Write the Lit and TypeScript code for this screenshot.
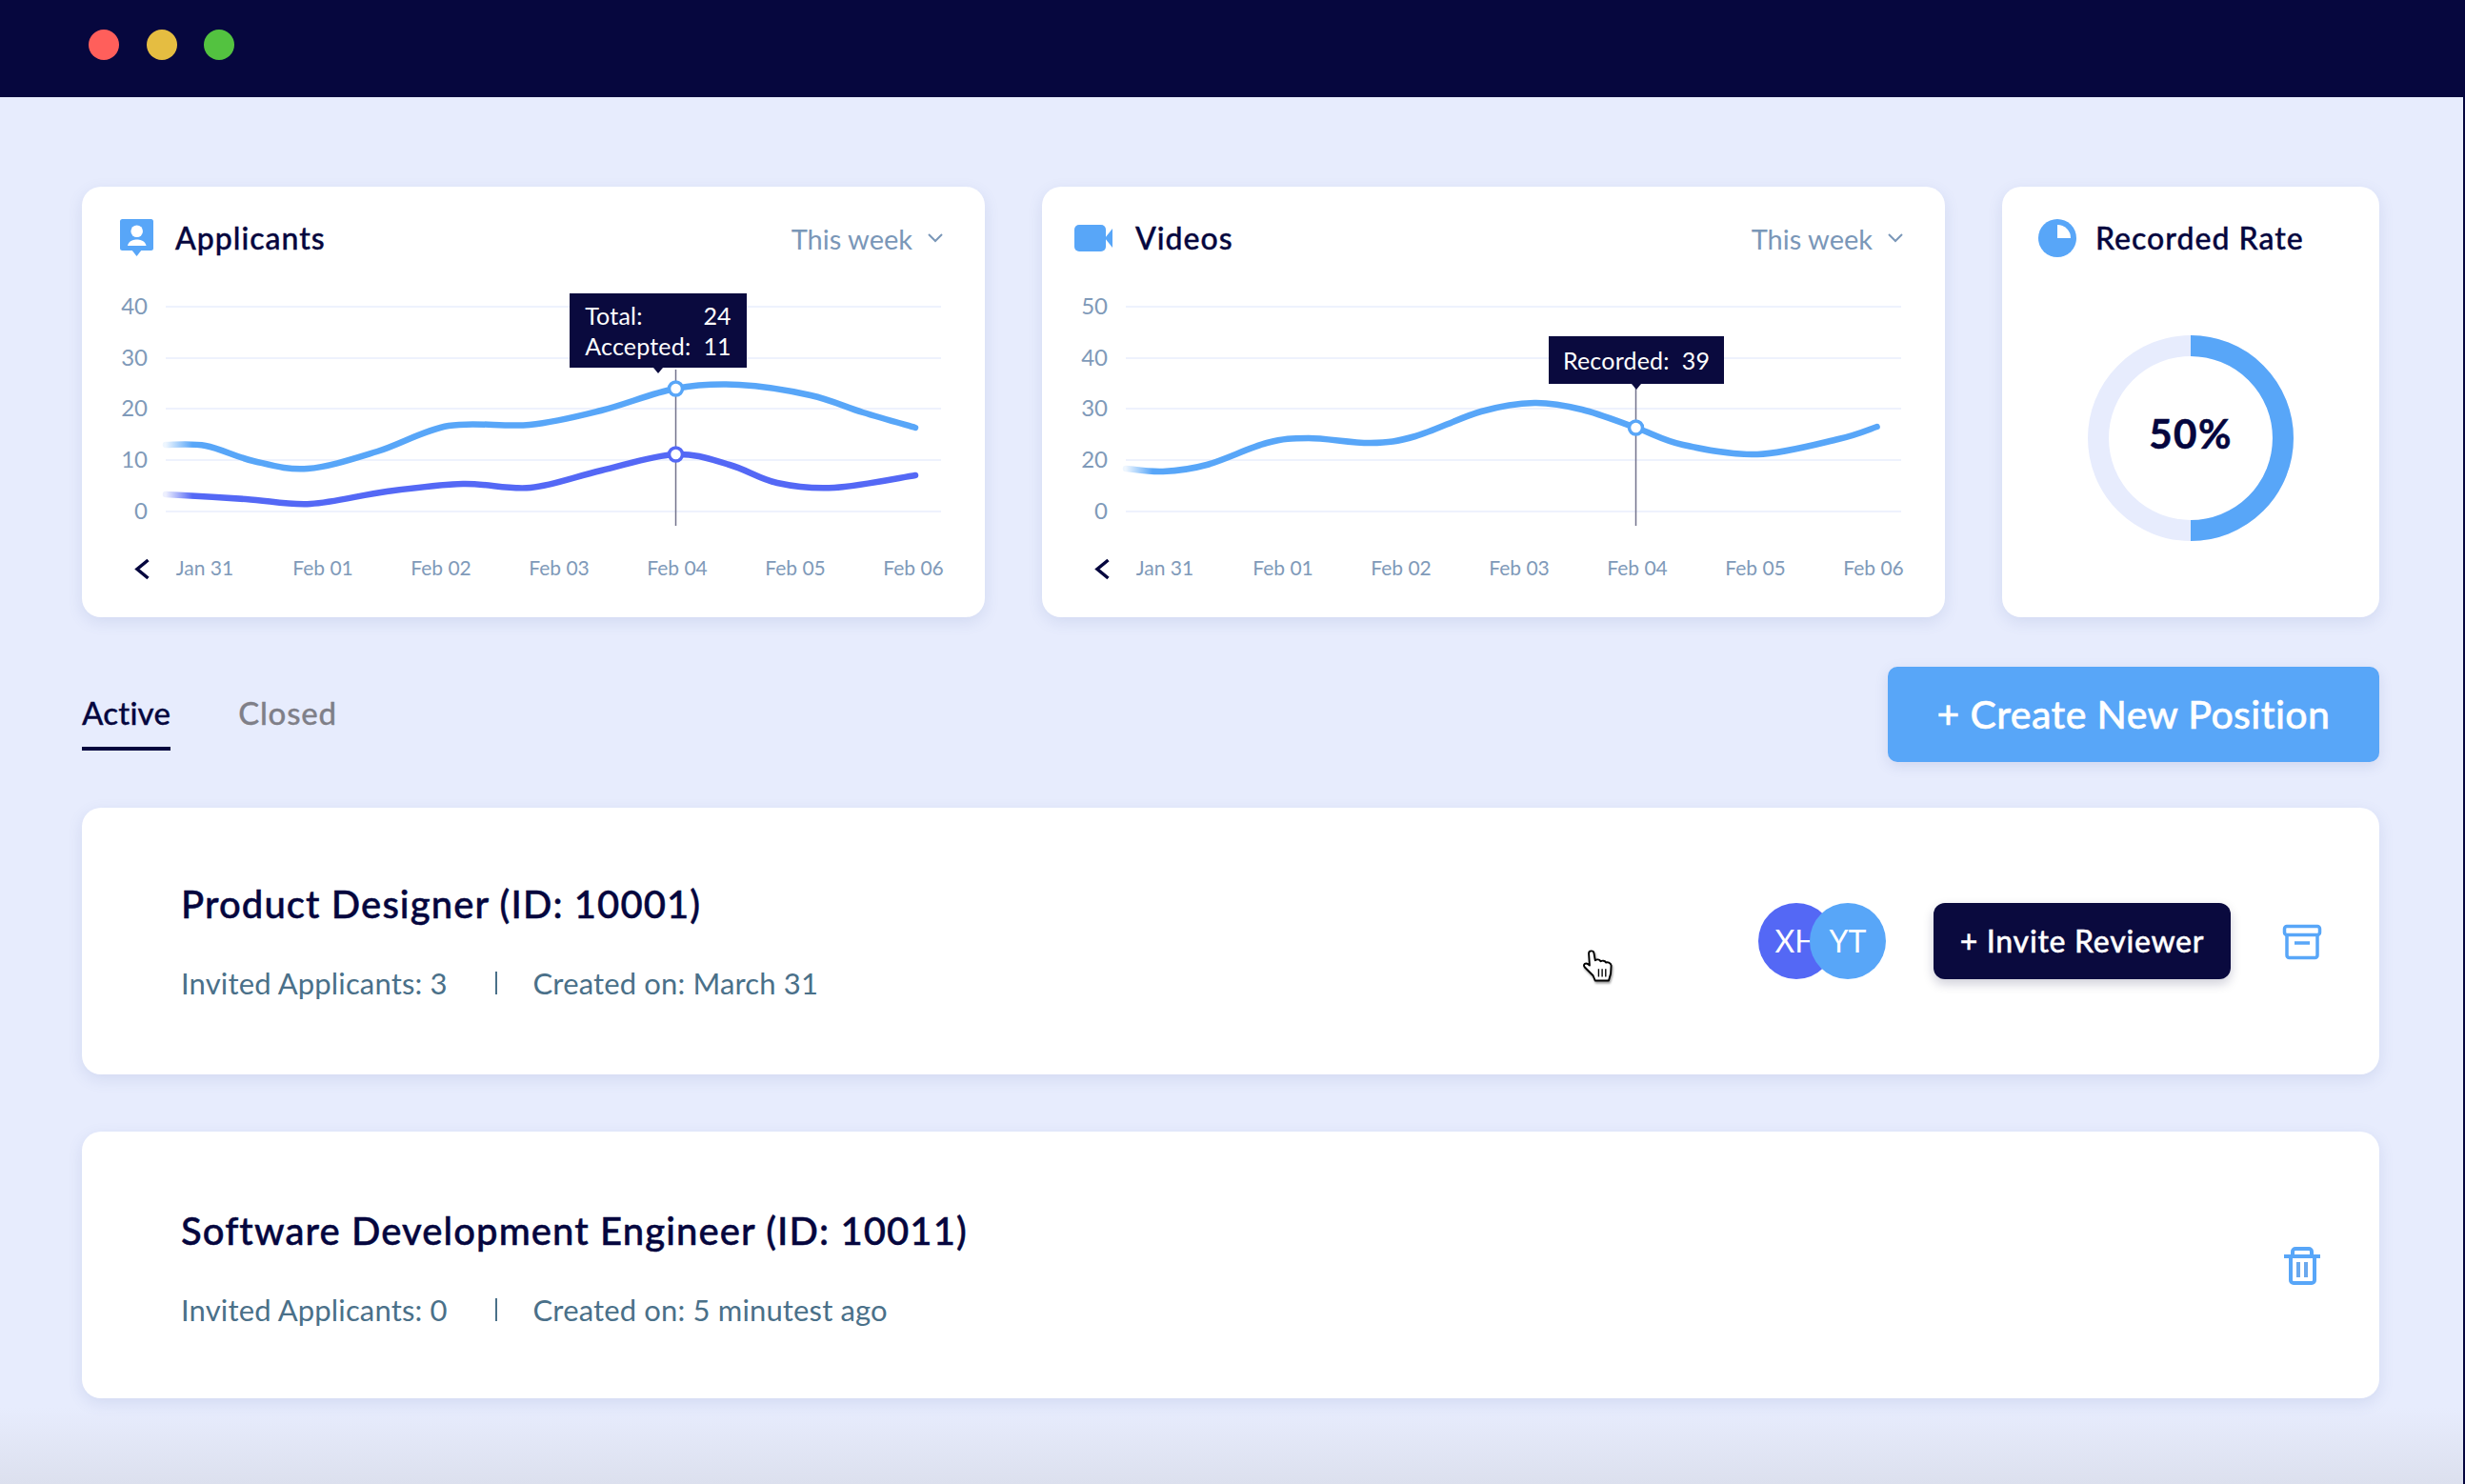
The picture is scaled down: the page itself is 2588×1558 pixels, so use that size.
import {LitElement, html, svg, css} from 'lit';
import {customElement, property} from 'lit/decorators.js';

type Pt = [number, number];

// catmull-rom through the points, so the curves stay soft between samples
const smooth = (p: Pt[]) => {
    let d = `M${p[0][0]} ${p[0][1]}`;
    for (let i = 0; i < p.length - 1; i++) {
        const a = p[Math.max(i - 1, 0)];
        const b = p[i];
        const c = p[i + 1];
        const e = p[Math.min(i + 2, p.length - 1)];
        d += ` C${b[0] + (c[0] - a[0]) / 6} ${b[1] + (c[1] - a[1]) / 6} ${c[0] - (e[0] - b[0]) / 6} ${c[1] - (e[1] - b[1]) / 6} ${c[0]} ${c[1]}`;
    }
    return d;
};

const BLUE = '#58a6f8';
const INDIGO = '#5468f5';
const GRID_Y = [26, 80, 133, 187, 241];
const DAYS = ['Jan 31', 'Feb 01', 'Feb 02', 'Feb 03', 'Feb 04', 'Feb 05', 'Feb 06'];

const cardStyles = css`
    .card {
        height: 452px;
        box-sizing: border-box;
        background: #fff;
        border-radius: 20px;
        box-shadow: 0 5px 16px rgba(84, 104, 170, 0.14);
        font-family: Lato, sans-serif;
    }
    .head {
        display: flex;
        align-items: center;
        height: 40px;
        padding: 34px 44px 0 34px;
    }
    .icon {
        width: 64px;
        height: 40px;
        flex: none;
    }
    .title {
        margin-bottom: 2px;
        font-size: 32px;
        font-weight: 500;
        color: #05063e;
        letter-spacing: 1px;
        -webkit-text-stroke: 0.4px #05063e;
    }
`;

const applicantsIcon = html`<svg class="icon" viewBox="0 0 64 40">
    <rect x="6" width="35" height="33" rx="2.5" fill="${BLUE}"></rect>
    <path d="M18 32h11l-5.500 7z" fill="${BLUE}"></path>
    <circle cx="23.700" cy="12.700" r="6.300" fill="#fff"></circle>
    <path d="M14 28c1-5 6-6.500 9.700-6.500s8.800 1.500 9.800 6.500z" fill="#fff"></path>
</svg>`;

const videoIcon = html`<svg class="icon" viewBox="0 0 64 40">
    <rect y="6" width="33" height="28" rx="5" fill="${BLUE}"></rect>
    <path d="M32 20l8-10v20z" fill="${BLUE}"></path>
</svg>`;

const pieIcon = html`<svg class="icon" viewBox="0 0 64 40">
    <circle cx="24" cy="20" r="20" fill="${BLUE}"></circle>
    <path d="M24 6a14 14 0 0 1 14 14h-14z" fill="#fff"></path>
</svg>`;

@customElement('chart-card')
export class ChartCard extends LitElement {
    @property({type: String}) heading = '';
    @property({attribute: false}) icon: unknown = null;
    @property({type: Array}) ticks: string[] = [];
    @property({attribute: false}) series: {color: string; points: Pt[]; marker: Pt}[] = [];
    @property({type: Number}) crossTop = 92;
    @property({attribute: false}) tip: {left: number; top: number; width: number; height: number; rows: [string, string][]} = {left: 0, top: 0, width: 0, height: 0, rows: []};

    render() {
        const t = this.tip;
        return html`
            <div class="card">
                <div class="head">
                    ${this.icon}
                    <span class="title">${this.heading}</span>
                    <span class="select">
                        This week
                        <svg width="16" height="10" viewBox="0 0 16 10"><path d="M1 1l7 7 7-7" fill="none" stroke="#7a97b8" stroke-width="2"></path></svg>
                    </span>
                </div>
                <div class="plot">
                    <svg width="948" height="352" viewBox="0 0 948 352">
                        <defs>
                            ${this.series.map((s, i) => svg`
                                <linearGradient id="fade${i}" gradientUnits="userSpaceOnUse" x1="88" y1="0" x2="116" y2="0">
                                    <stop offset="0" stop-color=${s.color} stop-opacity="0.1"></stop>
                                    <stop offset="1" stop-color=${s.color}></stop>
                                </linearGradient>`)}
                        </defs>
                        ${GRID_Y.map((y, i) => svg`
                            <line x1="88" x2="902" y1=${y} y2=${y} stroke="#eef2fd" stroke-width="2"></line>
                            <text class="tick" x="69" y=${y + 8} text-anchor="end">${this.ticks[i]}</text>`)}
                        <path d="M69.500 292l-11.500 9.500 11.500 9.500" fill="none" stroke="#05063e" stroke-width="3.500"></path>
                        ${DAYS.map((d, i) => svg`<text class="day" x=${129 + i * 124} y="308" text-anchor="middle">${d}</text>`)}
                        <line x1="623.500" x2="623.500" y1=${this.crossTop} y2="256" stroke="#73738c" stroke-width="1.500"></line>
                        ${this.series.map((s, i) => svg`
                            <path d=${smooth(s.points)} fill="none" stroke="url(#fade${i})" stroke-width="6.500" stroke-linecap="round"></path>
                            <circle cx=${s.marker[0]} cy=${s.marker[1]} r="7" fill="#fff" stroke=${s.color} stroke-width="3.500"></circle>`)}
                    </svg>
                    <div class="tip" style="left:${t.left}px;top:${t.top}px;width:${t.width}px;height:${t.height}px">
                        ${t.rows.map(([k, v]) => html`<span>${k}</span><span>${v}</span>`)}
                    </div>
                </div>
            </div>
        `;
    }

    static styles = [
        cardStyles,
        css`
            :host {
                display: block;
            }
            .select {
                display: flex;
                align-items: center;
                gap: 16px;
                margin-left: auto;
                font-size: 29px;
                font-weight: 400;
                color: #7a97b8;
            }
            .plot {
                position: relative;
                margin-top: 26px;
            }
            .plot svg {
                display: block;
            }
            .tick {
                font-size: 24px;
                fill: #7f9ab9;
            }
            .day {
                font-size: 21px;
                fill: #7f9ab9;
            }
            .tip {
                position: absolute;
                display: grid;
                grid-template-columns: auto auto;
                justify-content: center;
                align-content: center;
                column-gap: 13px;
                row-gap: 6px;
                background: #0a0a3e;
                color: #fff;
                font-size: 25px;
                line-height: 26px;
                letter-spacing: 0.2px;
                white-space: nowrap;
            }
            .tip::after {
                content: '';
                position: absolute;
                left: 50%;
                bottom: -6px;
                margin-left: -5px;
                border-left: 5px solid transparent;
                border-right: 5px solid transparent;
                border-top: 6px solid #0a0a3e;
            }
        `
    ];
}

@customElement('position-card')
export class PositionCard extends LitElement {
    @property({type: String}) heading = '';
    @property({type: String}) applicants = '';
    @property({type: String}) created = '';

    render() {
        return html`
            <div class="job">
                <div class="info">
                    <div class="name">${this.heading}</div>
                    <div class="meta">
                        <span>Invited Applicants: ${this.applicants}</span>
                        <i class="sep"></i>
                        <span>Created on: ${this.created}</span>
                    </div>
                </div>
                <slot></slot>
            </div>
        `;
    }

    static styles = css`
        :host {
            display: block;
        }
        .job {
            position: relative;
            display: flex;
            align-items: center;
            justify-content: space-between;
            height: 280px;
            box-sizing: border-box;
            padding: 0 60px 0 104px;
            background: #fff;
            border-radius: 20px;
            box-shadow: 0 5px 16px rgba(84, 104, 170, 0.14);
            font-family: Lato, sans-serif;
        }
        .info {
            padding-top: var(--info-pad, 0);
        }
        .name {
            font-size: 40px;
            font-weight: 500;
            line-height: 46px;
            color: #05063e;
            letter-spacing: 1.1px;
            -webkit-text-stroke: 0.5px #05063e;
        }
        .meta {
            display: flex;
            align-items: center;
            margin-top: 42px;
            font-size: 31px;
            line-height: 36px;
            letter-spacing: 0.15px;
            color: #4a7089;
        }
        .sep {
            width: 2px;
            height: 24px;
            margin: 0 38px 0 50px;
            background: #4a7089;
        }
    `;
}

@customElement('app-root')
export class AppRoot extends LitElement {
    render() {
        return html`
            <div class="titlebar">
                <i class="dot" style="background:#ff5f5b"></i>
                <i class="dot" style="background:#e5bd41"></i>
                <i class="dot" style="background:#53c240"></i>
            </div>
            <main>
                <section class="stats">
                    <chart-card
                        heading="Applicants"
                        .icon=${applicantsIcon}
                        .ticks=${['40', '30', '20', '10', '0']}
                        .series=${[
                            {
                                color: BLUE,
                                marker: [623.5, 112],
                                points: [[88, 171], [130, 172], [180, 188], [237, 196], [310, 178], [385, 151], [470, 150], [545, 135], [623, 112], [690, 108], [765, 119], [820, 137], [875, 153]]
                            },
                            {
                                color: INDIGO,
                                marker: [623.5, 181],
                                points: [[88, 223], [172, 228], [240, 233], [320, 220], [400, 212], [471, 216], [545, 198], [623, 181], [680, 192], [730, 211], [790, 216], [875, 203]]
                            }
                        ]}
                        .crossTop=${92}
                        .tip=${{left: 512, top: 12, width: 186, height: 78, rows: [['Total:', '24'], ['Accepted:', '11']]}}
                    ></chart-card>
                    <chart-card
                        heading="Videos"
                        .icon=${videoIcon}
                        .ticks=${['50', '40', '30', '20', '0']}
                        .series=${[
                            {
                                color: BLUE,
                                marker: [623.5, 153],
                                points: [[88, 196], [127, 199], [173, 192], [236, 169], [280, 164], [345, 169], [392, 162], [461, 136], [517, 127], [567, 134], [623.5, 153], [673, 171], [751, 181], [836, 165], [876.6, 152]]
                            }
                        ]}
                        .crossTop=${107}
                        .tip=${{left: 532, top: 57, width: 184, height: 50, rows: [['Recorded:', '39']]}}
                    ></chart-card>
                    <div class="card">
                        <div class="head">
                            ${pieIcon}
                            <span class="title">Recorded Rate</span>
                        </div>
                        <div class="donut">
                            <svg width="216" height="216" viewBox="0 0 216 216">
                                <circle cx="108" cy="108" r="97" fill="none" stroke="#e7ecfd" stroke-width="22"></circle>
                                <path d="M108 11a97 97 0 0 1 0 194" fill="none" stroke="${BLUE}" stroke-width="22"></path>
                                <text class="pct" x="108" y="119" text-anchor="middle">50%</text>
                            </svg>
                        </div>
                    </div>
                </section>

                <section class="toolbar">
                    <div class="tabs">
                        <span class="tab active">Active</span>
                        <span class="tab">Closed</span>
                    </div>
                    <button class="create">+ Create New Position</button>
                </section>

                <section class="jobs">
                    <position-card heading="Product Designer (ID: 10001)" applicants="3" created="March 31">
                        <div class="actions">
                            <div class="avatars">
                                <span class="avatar" style="background:${INDIGO}">XH</span>
                                <span class="avatar over" style="background:${BLUE}">YT</span>
                            </div>
                            <button class="invite">+ Invite Reviewer</button>
                            <svg class="tool" width="42" height="38" viewBox="0 0 42 38" fill="none" stroke="${BLUE}" stroke-width="3.500">
                                <rect x="2.500" y="2.500" width="37" height="9" rx="2.500"></rect>
                                <path d="M5 12v21a2.500 2.500 0 0 0 2.500 2.500h27a2.500 2.500 0 0 0 2.500-2.500v-21"></path>
                                <path d="M13 20h16"></path>
                            </svg>
                        </div>
                        <svg class="cursor" width="58" height="58" viewBox="0 0 55 55">
                            <path d="M17 27l-.8-12c0-3 4.800-3 5.100-.2l1.200 7.200c1.500-1.200 4.500-1.200 5.500 1 1.500-1 4.500-.8 5.200 1.200 1.500-.5 4.800 0 5.300 3l-.5 8-2 7H22.500l-2-5-8.500-8.500c-2-2.500 1-5.500 5-1.700z" fill="#fff" stroke="#000" stroke-width="1.800" stroke-linejoin="round"></path>
                            <path d="M26 30.500v8M29.500 30.500v8M33 30.500v8" stroke="#000" stroke-width="1.300"></path>
                        </svg>
                    </position-card>
                    <position-card class="later" heading="Software Development Engineer (ID: 10011)" applicants="0" created="5 minutest ago">
                        <svg class="tool" width="42" height="40" viewBox="0 0 42 40" fill="none" stroke="${BLUE}" stroke-width="4">
                            <path d="M2 10h38"></path>
                            <path d="M11 10v-5a3 3 0 0 1 3-3h14a3 3 0 0 1 3 3v5"></path>
                            <path d="M9 10v25a3 3 0 0 0 3 3h19a3 3 0 0 0 3-3v-25"></path>
                            <path d="M17 16v16M25 16v16" stroke="#6aa8ee"></path>
                        </svg>
                    </position-card>
                </section>
            </main>
        `;
    }

    static styles = [
        cardStyles,
        css`
            :host {
                display: block;
                height: 1558px;
                overflow: hidden;
                box-sizing: border-box;
                border-right: 2px solid #05063e;
                background: linear-gradient(#e7ecfd 1478px, #dce0ee 1558px);
                font-family: Lato, sans-serif;
            }
            .titlebar {
                display: flex;
                align-items: center;
                gap: 28.500px;
                height: 102px;
                box-sizing: border-box;
                padding: 0 0 8px 93px;
                margin-right: -2px;
                background: #06073e;
            }
            .dot {
                width: 32px;
                height: 32px;
                border-radius: 50%;
            }
            main {
                padding: 94px 88px 0 86px;
            }
            .stats {
                display: grid;
                grid-template-columns: 948px 948px 396px;
                gap: 60px;
            }
            .donut {
                display: flex;
                justify-content: center;
                margin-top: 82px;
            }
            .pct {
                font-size: 42px;
                font-weight: 700;
                letter-spacing: 1.5px;
                fill: #05063e;
                stroke: #05063e;
                stroke-width: 0.6px;
            }
            .toolbar {
                display: flex;
                justify-content: space-between;
                align-items: flex-start;
                margin-top: 52px;
            }
            .tabs {
                display: flex;
                gap: 71px;
            }
            .tab {
                height: 84px;
                line-height: 96px;
                font-size: 33px;
                font-weight: 500;
                letter-spacing: 0.8px;
                color: #7f7f88;
                -webkit-text-stroke: 0.3px currentColor;
            }
            .tab.active {
                letter-spacing: 0.2px;
                color: #05063e;
                border-bottom: 4px solid #05063e;
            }
            .create {
                width: 516px;
                height: 100px;
                padding: 0 0 2px;
                border: none;
                border-radius: 10px;
                background: #58a6f8;
                color: #fff;
                font: 500 41px Lato, sans-serif;
                letter-spacing: 0.4px;
                -webkit-text-stroke: 0.5px #fff;
                box-shadow: 0 4px 14px rgba(84, 104, 170, 0.16);
            }
            .jobs {
                display: flex;
                flex-direction: column;
                gap: 60px;
                margin-top: 48px;
            }
            .later {
                --info-pad: 6px;
            }
            .actions {
                display: flex;
                align-items: center;
            }
            .avatars {
                display: flex;
                margin-right: 50px;
            }
            .avatar {
                width: 80px;
                height: 80px;
                border-radius: 50%;
                color: #fff;
                font-size: 32px;
                line-height: 80px;
                text-align: center;
            }
            .avatar.over {
                margin-left: -26px;
            }
            .invite {
                width: 312px;
                height: 80px;
                margin-right: 54px;
                padding: 0 0 2px;
                border: none;
                border-radius: 12px;
                background: #0a0a3e;
                color: #fff;
                font: 500 32px Lato, sans-serif;
                letter-spacing: 0.7px;
                -webkit-text-stroke: 0.4px #fff;
                box-shadow: 0 5px 12px rgba(10, 10, 62, 0.2);
            }
            .tool {
                display: block;
                margin-top: 2px;
            }
            .cursor {
                position: absolute;
                left: 1565px;
                top: 137px;
                filter: drop-shadow(1px 2px 1px rgba(0, 0, 0, 0.4));
            }
        `
    ];
}
